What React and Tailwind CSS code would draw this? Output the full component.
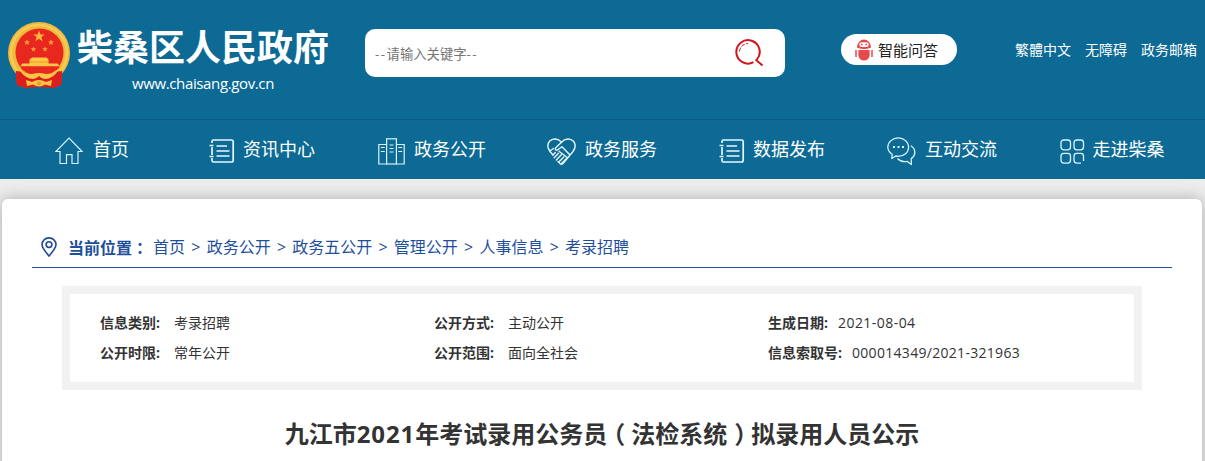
import React from 'react';

const Emblem = () => (
  <svg width="64" height="68" viewBox="0 0 64 68" className="shrink-0">
    <circle cx="31" cy="31" r="31" fill="#f0b93c" />
    <circle cx="31" cy="31" r="28" fill="none" stroke="#f6cb55" strokeWidth="2.500" />
    <circle cx="31.5" cy="30.5" r="24" fill="#e8281f" />
    <path d="M31 8.500l1.500 4h4.200l-3.300 2.600 1.200 4.100-3.600-2.400-3.600 2.400 1.200-4.100-3.300-2.600h4.200z" fill="#fbb53a" />
    <path d="M19 17.500l.9 1.800 2 .2-1.500 1.400.4 2-1.800-1-1.800 1 .4-2-1.500-1.400 2-.2zM43 17.500l.9 1.800 2 .2-1.500 1.400.4 2-1.800-1-1.800 1 .4-2-1.500-1.400 2-.2zM25.500 24.500l.8 1.600 1.900.2-1.400 1.300.3 1.800-1.600-.9-1.600.9.3-1.800-1.400-1.300 1.900-.2zM37 24.500l.8 1.600 1.900.2-1.400 1.300.3 1.800-1.600-.9-1.600.9.3-1.800-1.400-1.300 1.900-.2z" fill="#f79a35" />
    <path d="M24 35.500h14.500l2 2v4h9l2.500 3H12l2.500-3h7v-4z" fill="#fcc844" />
    <path d="M22 40h19" stroke="#ee8a2a" strokeWidth=".8" />
    <path d="M12 44.500h40l-3 4H15z" fill="#e8281f" />
    <path d="M8 49l9 1 6 4 8-3 8 3 6-4 9-1v10l-1 4-7 3-15-1-15 1-7-3-1-4z" fill="#dc1f1c" />
    <path d="M11 46q6 6 13 6 4-1 7-1t7 1q7 0 13-6l-1 3q-6 8-13 8-3 0-6-3-3 3-6 3-7 0-13-8z" fill="#fac744" />
    <path d="M18 58l6 2q7-4 14 0l6-2-1 6-6-1.500q-6 4-12 0l-6 1.500z" fill="#fac744" />
    <circle cx="31" cy="61.500" r="2" fill="#e99b2c" />
  </svg>
);

const SearchIcon = () => (
  <svg width="30" height="28" viewBox="0 0 30 28" fill="none" stroke="#d0161b">
    <path d="M18.500 23.200A11.700 11.700 0 1 1 21.800 20.600" strokeWidth="2" />
    <path d="M20.500 20.500l7 6" strokeWidth="2" />
    <path d="M4.500 12.500c.3-4.400 3.500-7.800 8.500-8" strokeWidth="1" strokeDasharray="4 1.500" />
  </svg>
);

const RobotIcon = () => (
  <svg width="18" height="22" viewBox="0 0 18 22">
    <path d="M2 8.600a7 8 0 0 1 14 0q-7 3-14 0z" fill="#e84a4c" />
    <rect x="4.300" y="3.300" width="9.400" height="4.700" rx="2.300" fill="#fff" />
    <circle cx="6.800" cy="5.400" r=".9" fill="#e84a4c" />
    <circle cx="11.200" cy="5.400" r=".9" fill="#e84a4c" />
    <path d="M3.400 11h11.200v5.500q-1 5-5.600 5t-5.600-5z" fill="#e84a4c" />
    <path d="M1 11v7M17 11v7" stroke="#e84a4c" strokeWidth="1.500" />
  </svg>
);

const HomeIcon = () => (
  <svg width="28" height="28" viewBox="0 0 28 28" fill="none" stroke="#d8f4ff" strokeWidth="1.200">
    <path d="M5 14.500H.8L14 1.200l13.200 13.300H23v12h-6v-8.800h-5.500v8.800H5z" />
  </svg>
);

const ListIcon = () => (
  <svg width="26" height="24" viewBox="0 0 26 24" fill="none" stroke="#e4f7ff" strokeWidth="1.700">
    <path d="M3 4V2.500Q3 1 4.500 1h18Q24.200 1 24.200 2.500v18.800q0 1.700-1.700 1.700h-18Q3 23 3 21.300V19M3 8v8" />
    <path d="M.5 6.500h4M.5 17.500h4M7.500 7H18M7.500 12H20.500M7.500 17H20.500" />
  </svg>
);

const BuildingIcon = () => (
  <svg width="27" height="27" viewBox="0 0 27 27" fill="none" stroke="#d8f4ff" strokeWidth="1.200">
    <path d="M8.600 6.500H.8v19.500h7.800M18.400 6.500h7.800v19.500h-7.800" />
    <rect x="8.600" y=".8" width="9.800" height="25.200" />
    <path d="M2.800 9.500h4M2.800 13.500h4M11.500 7h4M11.500 10.500h4M11.500 14h4M20.200 9.500h4M20.200 13.500h4" />
  </svg>
);

const HandshakeIcon = () => (
  <svg width="29" height="27" viewBox="0 0 29 27" fill="none" stroke="#e4f7ff" strokeWidth="1.400" strokeLinejoin="round" strokeLinecap="round">
    <path d="M6 17L3 13.500C.5 10 .3 6 2.500 3.300 5.500 0 11 .2 14.500 4.200 18 .2 23.500 0 26.500 3.300c2.200 2.700 2 6.700-.5 10.200L16 25.500q-1.500 1.300-3 0l-2-2" />
    <path d="M14.500 4.200L8.500 10q-.8 2.200 1.500 2.300l5-3.500 7.500 7.800M3.500 12.500l3-2" />
    <path d="M6 17l2.300-2.500M7.200 19.800l4.300-4.500M9.300 22l5-5.200M11.800 24l5-5M14.500 25.500l4.500-4.500M12 13.200l8.500 6.500" />
  </svg>
);

const ChatIcon = () => (
  <svg width="29" height="29" viewBox="0 0 29 29" fill="none" stroke="#d8f4ff" strokeWidth="1.300" strokeLinejoin="round">
    <path d="M4.800 21.500l.4-4.200C2.400 15.400.8 13 .8 10.300.8 5 5.600.9 11.300.9S21.600 5 21.600 10.300s-4.600 9-10.300 9c-.9 0-1.800-.1-2.600-.3z" />
    <path d="M23.800 8.800c2.600 1.500 4 3.900 4 6.600 0 2.600-1.400 4.600-3.600 6.200l.2 6-4-3.200c-3.800.8-7.500-.3-9.900-2.900" />
    <path d="M6 9.900h2M10.500 9.900h2M15 9.900h2" strokeWidth="2" />
  </svg>
);

const GridIcon = () => (
  <svg width="25" height="25" viewBox="0 0 25 25" fill="none" stroke="#d8f4ff" strokeWidth="1.300">
    <rect x="1" y="1" width="9.500" height="9.800" rx="2.800" />
    <rect x="14" y="1" width="9.500" height="9.800" rx="2.800" />
    <rect x="1" y="14.300" width="9.500" height="9.800" rx="2.800" />
    <path d="M21 24.100h-4.200q-2.800 0-2.800-2.800v-4.200q0-2.800 2.800-2.800h3.900q2.800 0 2.800 2.800v5" />
  </svg>
);

const PinIcon = () => (
  <svg width="16" height="20" viewBox="0 0 16 20" fill="none" stroke="#1f4a94" strokeWidth="1.600">
    <path d="M8 19C4 14.500 1 11 1 7.600a7 6.700 0 0 1 14 0C15 11 12 14.500 8 19z" />
    <circle cx="8" cy="7.600" r="2.900" />
  </svg>
);

const NAV = [
  { label: '首页', Icon: HomeIcon, gap: 'gap-[10px]' },
  { label: '资讯中心', Icon: ListIcon, gap: 'gap-[8px]' },
  { label: '政务公开', Icon: BuildingIcon, gap: 'gap-[9px]' },
  { label: '政务服务', Icon: HandshakeIcon, gap: 'gap-[9px]' },
  { label: '数据发布', Icon: ListIcon, gap: 'gap-[8px]' },
  { label: '互动交流', Icon: ChatIcon, gap: 'gap-[9px]' },
  { label: '走进柴桑', Icon: GridIcon, gap: 'gap-[8px]' },
];

const CRUMBS = ['首页', '政务公开', '政务五公开', '管理公开', '人事信息', '考录招聘'];

const INFO = [
  { k: '信息类别', v: '考录招聘', w: 'w-[74px]' },
  { k: '公开方式', v: '主动公开', w: 'w-[74px]' },
  { k: '生成日期', v: '2021-08-04', w: 'w-[70px]', track: 'tracking-[0.45px]' },
  { k: '公开时限', v: '常年公开', w: 'w-[74px]' },
  { k: '公开范围', v: '面向全社会', w: 'w-[74px]' },
  { k: '信息索取号', v: '000014349/2021-321963', w: 'w-[84px]', track: 'tracking-[0.3px]' },
];

export default function App() {
  return (
    <div lang="zh-CN" className="flex h-[461px] w-[1205px] flex-col overflow-hidden bg-[#ededed] font-['Open_Sans','Noto_Sans_CJK_SC',sans-serif] text-[#333]">
      <header className="flex h-[119px] shrink-0 items-start bg-[#0c6a95] text-white">
        <div className="flex w-[365px] pl-[8px] pt-[22px]">
          <Emblem />
          <div className="flex flex-col pl-[5px]">
            <h1 className="h-[51px] whitespace-nowrap text-[36px] font-bold leading-[52px]">柴桑区人民政府</h1>
            <span className="w-[252px] text-center text-[15px] leading-[20px] tracking-[-0.37px]">www.chaisang.gov.cn</span>
          </div>
        </div>
        <div className="mt-[29px] flex h-[48px] w-[420px] items-center justify-between rounded-[10px] bg-white pl-[10px] pr-[20px]">
          <span className="pt-[3px] text-[13.33px] text-[#757575]">
            <span className="tracking-[1.500px]">--</span>请输入关键字<span className="tracking-[1.500px]">--</span>
          </span>
          <SearchIcon />
        </div>
        <div className="ml-[56px] mt-[34px] flex h-[31px] w-[116px] items-center gap-[5px] rounded-full bg-white pl-[14px] text-[15px] text-[#222]">
          <RobotIcon />
          <span className="pt-px">智能问答</span>
        </div>
        <nav className="ml-auto mr-[8px] mt-[40px] flex gap-[14px] text-[14px] leading-[20px]">
          <a>繁體中文</a>
          <a>无障碍</a>
          <a>政务邮箱</a>
        </nav>
      </header>
      <nav className="grid h-[60px] shrink-0 grid-cols-[repeat(7,170px)] border-t border-[#085d87] bg-[#0c6a95] pl-[7px] text-[18px] text-white">
        {NAV.map(({ label, Icon, gap }) => (
          <a key={label} className={'flex items-center justify-center pt-[3px] ' + gap}>
            <Icon />
            <span className="-mt-[4px] leading-[24px]">{label}</span>
          </a>
        ))}
      </nav>
      <main className="ml-[2px] mt-[20px] h-[300px] w-[1200px] shrink-0 rounded-[6px] bg-white px-[30px] shadow-[0_0_16px_#aaa]">
        <div className="flex h-[68px] items-center pl-[9px] pt-[28px] text-[16px] text-[#1f4f9c]">
          <PinIcon />
          <span className="ml-[11px] mr-[5px] font-bold">
            当前位置<span lang="zh-TW" className="font-['Noto_Sans_CJK_TC',sans-serif]">：</span>
          </span>
          {CRUMBS.map((c, i) => (
            <React.Fragment key={c}>
              {i > 0 && <span className="w-[21.600px] text-center">&gt;</span>}
              <a>{c}</a>
            </React.Fragment>
          ))}
        </div>
        <div className="h-px bg-[#2b4ca0]" />
        <div className="mx-[30px] mt-[18px] grid h-[104px] grid-cols-3 content-start border-8 border-[#f2f2f2] pl-[30px] pr-[32px] pt-[14px] text-[14px] leading-[30px]">
          {INFO.map(({ k, v, w, track = '' }) => (
            <div key={k} className="flex">
              <b className={'shrink-0 whitespace-nowrap ' + w}>{k}:</b>
              <span className={track}>{v}</span>
            </div>
          ))}
        </div>
        <h2 className="mt-[26px] text-center text-[24px] font-bold leading-[36px]">
          九江市<span className="tracking-[0.9px]">2021</span>年考试录用公务员<span className="pl-[6px] pr-[6px] [font-feature-settings:'halt']">（</span>法检系统<span className="pl-[7px] pr-[5px] [font-feature-settings:'halt']">）</span>拟录用人员公示
        </h2>
      </main>
    </div>
  );
}
